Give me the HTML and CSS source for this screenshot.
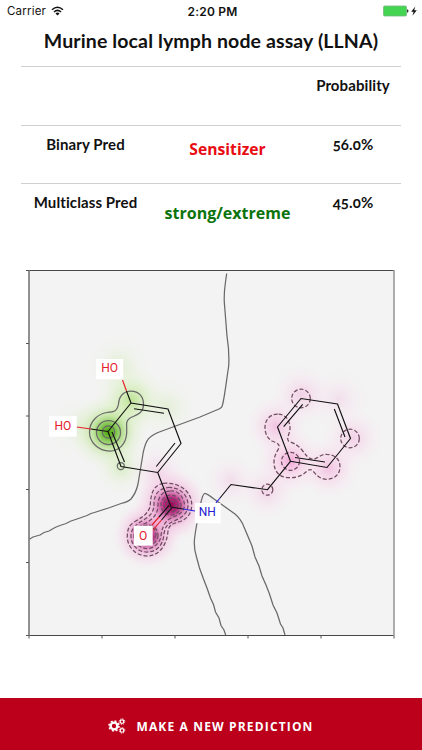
FILE: index.html
```
<!DOCTYPE html>
<html lang="en">

<head>
    <meta charset="UTF-8">
    <meta name="viewport" content="width=device-width, initial-scale=1.0">
    <title>Murine local lymph node assay (LLNA)</title>
    <link rel="stylesheet" href="styles.css">
</head>

<body>
    <!-- Status bar -->
    <div class="status-bar">
        <div class="carrier">
            <span>Carrier</span>
            <svg width="13" height="10" viewBox="0 0 13 10">
                <path d="M1 3.7Q6.5-1.3 12 3.7M3 6Q6.5 2.7 10 6" fill="none" stroke="#111" stroke-width="1.5" />
                <path d="M4.5 7.4Q6.5 5.8 8.5 7.4L6.5 9.5Z" fill="#111" />
            </svg>
        </div>
        <div class="time">2:20 PM</div>
        <div class="battery">
            <svg width="35" height="12" viewBox="0 0 35 12">
                <rect x="0.5" y="1" width="23" height="10" rx="1.2" fill="#43d551" stroke="#79b680" stroke-width="0.8" />
                <path d="M24 4.5h1q1 1.5 0 3h-1z" fill="#333" />
                <path d="M32.3 1.5L28.2 6.7H30.6L29.4 10.8L33.8 5.3H31.2Z" fill="#111" />
            </svg>
        </div>
    </div>

    <!-- Results -->
    <h1>Murine local lymph node assay (LLNA)</h1>
    <div class="results">
        <div class="row">
            <div class="label"></div>
            <div class="value"></div>
            <div class="prob">Probability</div>
        </div>
        <div class="row">
            <div class="label">Binary Pred</div>
            <div class="value sensitizer">Sensitizer</div>
            <div class="prob number">56.0%</div>
        </div>
        <div class="row">
            <div class="label">Multiclass Pred</div>
            <div class="value strong">strong/extreme</div>
            <div class="prob number">45.0%</div>
        </div>
    </div>

    <!-- Probability map -->
    <svg class="map" width="374" height="376" viewBox="24 266 374 376">
        <defs>
            <radialGradient id="green">
                <stop offset="0" stop-color="#4aa50c" />
                <stop offset="0.22" stop-color="#6fbe35" stop-opacity="0.85" />
                <stop offset="0.45" stop-color="#a6dc70" stop-opacity="0.5" />
                <stop offset="0.7" stop-color="#cbeaa8" stop-opacity="0.25" />
                <stop offset="1" stop-color="#dcf3c0" stop-opacity="0" />
            </radialGradient>
            <radialGradient id="lightGreen">
                <stop offset="0" stop-color="#a8dc70" stop-opacity="0.75" />
                <stop offset="0.4" stop-color="#c8eba0" stop-opacity="0.45" />
                <stop offset="0.7" stop-color="#dcf3c4" stop-opacity="0.2" />
                <stop offset="1" stop-color="#e4f5d2" stop-opacity="0" />
            </radialGradient>
            <radialGradient id="magenta">
                <stop offset="0" stop-color="#95004f" />
                <stop offset="0.2" stop-color="#b5207a" stop-opacity="0.95" />
                <stop offset="0.38" stop-color="#dd78b8" stop-opacity="0.75" />
                <stop offset="0.6" stop-color="#f4b4dc" stop-opacity="0.45" />
                <stop offset="1" stop-color="#fae0f0" stop-opacity="0" />
            </radialGradient>
            <radialGradient id="pink">
                <stop offset="0" stop-color="#f0a0d4" stop-opacity="0.7" />
                <stop offset="0.4" stop-color="#f8c0e2" stop-opacity="0.45" />
                <stop offset="0.7" stop-color="#fbd8ec" stop-opacity="0.25" />
                <stop offset="1" stop-color="#fbe2f0" stop-opacity="0" />
            </radialGradient>
        </defs>

        <rect x="29" y="270.5" width="365" height="365" fill="#f3f3f3" />

        <!-- Heat -->
        <g fill="url(#lightGreen)">
            <circle cx="131" cy="400" r="36" />
            <circle cx="119" cy="366" r="32" opacity="0.35" />
            <circle cx="121" cy="467" r="28" opacity="0.5" />
            <circle cx="80" cy="427" r="32" opacity="0.25" />
            <circle cx="167" cy="407" r="32" opacity="0.3" />
        </g>
        <circle cx="108.5" cy="432" r="38" fill="url(#green)" />
        <g fill="url(#pink)">
            <circle cx="158" cy="473" r="30" opacity="0.5" />
            <circle cx="231" cy="481" r="28" opacity="0.4" />
            <circle cx="267" cy="491" r="29" opacity="0.55" />
            <circle cx="290" cy="461" r="34" />
            <circle cx="291" cy="461" r="20" />
            <circle cx="276" cy="426" r="31" opacity="0.85" />
            <circle cx="302" cy="395" r="31" opacity="0.6" />
            <circle cx="339" cy="399" r="30" opacity="0.35" />
            <circle cx="353" cy="438" r="31" opacity="0.6" />
            <circle cx="329" cy="468" r="31" opacity="0.85" />
        </g>
        <g fill="url(#magenta)">
            <circle cx="147" cy="535" r="35" />
            <circle cx="171" cy="505" r="38" />
        </g>

        <!-- Zero level -->
        <g class="contour">
            <path d="M226.7 273.5L225.5 282Q223.5 296 224.6 306L227 336Q229.5 352 228.7 366C226.5 380 224.5 398 222.5 405Q222 408 219 409L200 417L162 431C148 436 146 440 143.3 452L138 484Q136 493 131 499Q128 502 121 503.5L110 507.5L96 512L91 513.5L87 515.5L77 519L71 521L66 523.5L60 525.5L55 527.5L49 531L44 532.5L40 535L33 537L29 539.5" />
            <path d="M225.7 635L224 630L221 625.5L219 618L215.5 612L213.5 604.5L210.5 598L207 588L203.5 579L199.5 568L196.5 557C193 546 194 539 197 523L200.5 504Q203 493 205 493.3Q207 493.5 214 499L235 514Q241 519 244 527L252 546L255 557L259 566L262 576L266 585L269.5 594L273 605L277 613L280.5 624L283 628L285 635" />
        </g>

        <!-- Positive levels -->
        <g class="contour">
            <path d="M131 391C139 391 143.5 397 143.5 404C143.5 414 136 415 130 418C125 421 127 426 126.7 433C126 444 119 451 110 451C98 451 89.5 442 89.5 432C89.5 421 98 414 107 412.5C113 412 117 412 118.5 404C119 396 124 391 131 391Z" />
            <circle cx="108.5" cy="432.5" r="12" />
            <circle cx="108.5" cy="432" r="6.2" />
            <circle cx="120.8" cy="466" r="3.5" />
        </g>

        <!-- Negative levels -->
        <g class="contour dashed">
            <path d="M163.3 483.3C180 482 192 492 191.7 505C191.5 514 187 519 180 521.5C172 524 169 525 168 531C167 545 159 556 147.3 556C136 556 127 547 127.3 536C127.5 529 129 525 135 521.5C142 517 147 515 150 507C151 500 150 486 163.3 483.3Z" />
            <path d="M168 487.5C180 487 188 495 188 505C188 514 181 518 174 521C167 524 165 527 164 534C163 546 156 552 147 552C138 552 131 545 131 536C131 528 137 524 142 521C149 517 154 513 154 504C154 496 157 489 168 487.5Z" />
            <path d="M170 491C178 490 184 497 184.5 505C184 513 178 515 171 518C164 522 162 528 161 536C160 543 154 548.5 147 548.5C140 548.5 134 543 134 536C134 529 140 526 146 523C154 518 158 514 158 504C158 498 162 491 170 491Z" />
            <circle cx="171" cy="505" r="10" />
            <circle cx="171" cy="505" r="7" />
            <circle cx="171" cy="505" r="4" />
            <circle cx="148" cy="535" r="10" />
            <circle cx="149" cy="534" r="7" />
            <path d="M277.7 414C270 414 265 420 265 427.3C265 433 267 438 272 441C277 443 280 444 279 448C276 453 274 457 274 462C274 472 280 477.7 289 477.7C297 478 303 475 307 471C311 468 312 470 315 473.3C318 477 322 479.3 327 479.3C335 479 340 474 340 466.7C340 459 334 454.3 326.7 454.3C321 454 317 459 313.3 459.3C308 459 306 455 302 450C297 444 292 443 288.5 441C286 438 290 434 290 428C290 420 285 414 277.7 414Z" />
            <circle cx="290.5" cy="461.3" r="9" />
            <circle cx="301" cy="398.5" r="9.3" />
            <circle cx="350" cy="438.5" r="9.3" />
            <circle cx="267.3" cy="489.7" r="5.5" />
        </g>

        <!-- Bonds -->
        <g class="bond">
            <path d="M126.5 391L131 403L168 409L181 443.5L157.7 472.5L121 466.5L108 431.5L131 403" />
            <path d="M134 408.7L164 413.3M175 443L156.3 466.5M112 432L124.5 462" />
            <path d="M91 429L108 431.5M157.7 472.5L171 507L183 509" />
            <path d="M169 505.5L159 517M171.7 508L161.5 520" />
            <path d="M220 498L231 484.5L267.5 489.7L290.5 461.3L277.5 427L301 398.5L337.5 404L350.5 438.5L327 467.5L290.5 461.3" />
            <path d="M283.7 426.7L302.7 404.3M334.3 409L345 437M295 457.5L325 462" />
        </g>
        <path class="bond oxygen" d="M122.5 380L126.5 391M76.7 427L91 429M159 517L152 525M161.5 520L152.5 530.5" />
        <path class="bond nitrogen" d="M183 509L195 511M216 502.8L220 498" />

        <!-- Atoms -->
        <g fill="#fff">
            <rect x="96" y="359" width="27.3" height="20.3" />
            <rect x="49" y="416" width="27.7" height="20.7" />
            <rect x="134" y="525.7" width="18.7" height="20" />
            <rect x="195" y="503" width="25.7" height="20.3" />
        </g>
        <g class="atom oxygen-text">
            <text x="109.7" y="372.2">HO</text>
            <text x="62.8" y="430.2">HO</text>
            <text x="143.2" y="540">O</text>
        </g>
        <text class="atom nitrogen-text" x="207.3" y="516.3">NH</text>

        <!-- Axes -->
        <path d="M29 270.5H394M29 635.5H394" stroke="#484848" />
        <path d="M29 270V636" stroke="#777" stroke-width="1.6" />
        <path d="M394 270V636" stroke="#999" stroke-width="1.6" />
        <path d="M26 270.5H29M26 343.5H29M26 416H29M26 489.5H29M26 562.5H29M26 635.5H29M29 636V638.5M102 636V638.5M175 636V638.5M248 636V638.5M321 636V638.5M394 636V638.5" stroke="#555" />
    </svg>

    <!-- Footer button -->
    <button class="predict">
        <svg width="18" height="17" viewBox="0 0 18 17">
            <g fill="none" stroke="#fff">
                <circle cx="6" cy="8" r="3.4" stroke-width="2.4" />
                <circle cx="6" cy="8" r="5" stroke-width="1.6" stroke-dasharray="1.96 1.96" />
                <circle cx="14" cy="3.6" r="1.8" stroke-width="1.2" />
                <circle cx="14" cy="3.6" r="2.8" stroke-width="1" stroke-dasharray="1.1 1.1" />
                <circle cx="14" cy="12.4" r="1.8" stroke-width="1.2" />
                <circle cx="14" cy="12.4" r="2.8" stroke-width="1" stroke-dasharray="1.1 1.1" />
            </g>
        </svg>
        <span>MAKE A NEW PREDICTION</span>
    </button>
</body>

</html>
```
FILE: styles.css
```
* {
    margin: 0;
    padding: 0;
    box-sizing: border-box;
}

body {
    height: 750px;
    display: flex;
    flex-direction: column;
    overflow: hidden;
    background-color: #fff;
    color: #111;
    font-family: "Lato", sans-serif;
}

/* Status bar */
.status-bar {
    height: 22px;
    padding: 0 4px 0 7px;
    display: grid;
    grid-template-columns: 1fr auto 1fr;
    align-items: center;
    font-family: "Inter", sans-serif;
    font-size: 11.5px;
}

.carrier {
    display: flex;
    align-items: center;
    gap: 5px;
    letter-spacing: 0.2px;
}

.time {
    font-size: 12px;
    font-weight: 600;
    letter-spacing: 0.2px;
}

.battery {
    display: flex;
    justify-content: flex-end;
}

/* Results */
h1 {
    height: 44px;
    line-height: 38px;
    font-size: 19.5px;
    font-weight: 700;
    letter-spacing: 0.12px;
    text-align: center;
    white-space: nowrap;
}

.results {
    margin: 0 21px;
}

.row {
    height: 58.7px;
    display: grid;
    grid-template-columns: 129px 155px 96px;
    border-top: 1px solid #d0d0d0;
    text-align: center;
    font-size: 15px;
    font-weight: 700;
    line-height: 18px;
    white-space: nowrap;
}

.label,
.prob {
    padding-top: 9px;
    letter-spacing: 0.1px;
}

.value {
    padding-top: 14px;
    font-family: "Open Sans", sans-serif;
    font-size: 16px;
}

.sensitizer {
    font-size: 15.7px;
    color: #e80c12;
}

.strong {
    padding-top: 20px;
    color: #0b730b;
}

.number {
    font-variant-numeric: oldstyle-nums;
}

/* Probability map */
.map {
    display: block;
    margin: 24px 0 0 24px;
    flex-shrink: 0;
}

.contour {
    fill: none;
    stroke: #696969;
    stroke-width: 1.25;
}

.dashed {
    stroke: #704c62;
    stroke-dasharray: 4 2;
}

.bond {
    fill: none;
    stroke: #111;
    stroke-width: 1.15;
}

.oxygen {
    stroke: #e8202a;
}

.nitrogen {
    stroke: #2b22e0;
}

.atom {
    font-family: "Roboto", sans-serif;
    font-size: 12px;
    text-anchor: middle;
}

.oxygen-text {
    fill: #e3202a;
}

.nitrogen-text {
    fill: #2418d0;
}

/* Footer button */
.predict {
    width: 100%;
    height: 52px;
    margin-top: auto;
    padding-top: 4px;
    display: flex;
    flex-shrink: 0;
    justify-content: center;
    align-items: center;
    gap: 10px;
    border: none;
    background-color: #bc001b;
    color: #fff;
    font-family: "Open Sans", sans-serif;
    font-size: 12px;
    font-weight: 700;
    letter-spacing: 1.15px;
}
```
